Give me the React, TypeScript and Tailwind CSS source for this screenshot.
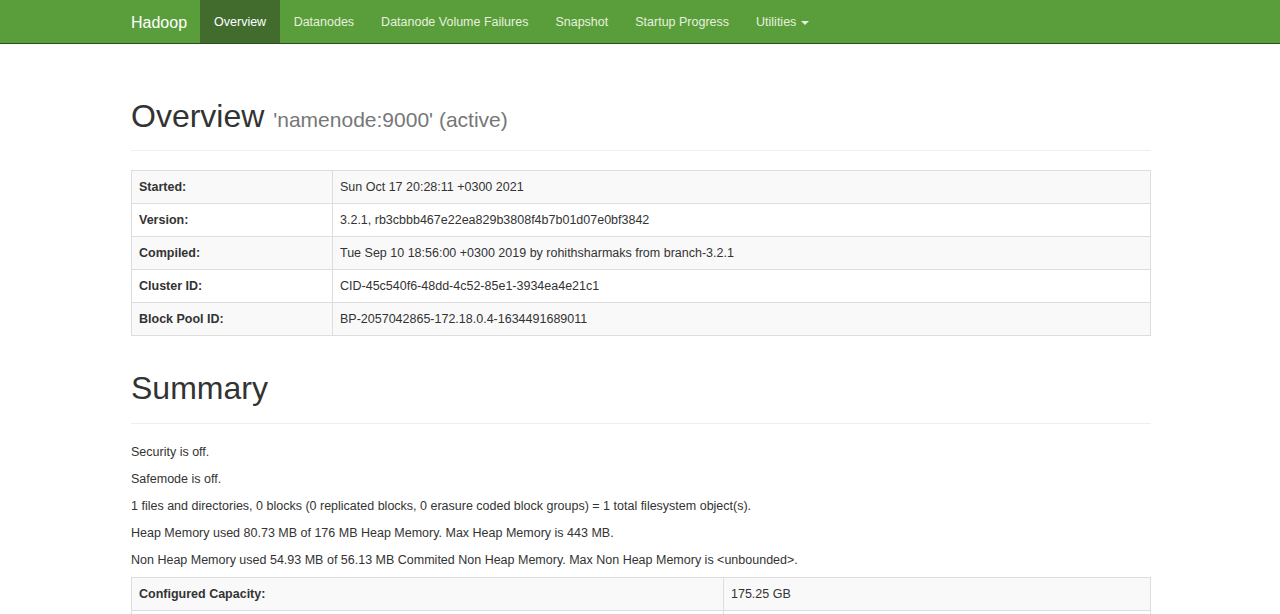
const navItems = ['Overview', 'Datanodes', 'Datanode Volume Failures', 'Snapshot', 'Startup Progress'];

const overviewRows: [string, string][] = [
  ['Started:', 'Sun Oct 17 20:28:11 +0300 2021'],
  ['Version:', '3.2.1, rb3cbbb467e22ea829b3808f4b7b01d07e0bf3842'],
  ['Compiled:', 'Tue Sep 10 18:56:00 +0300 2019 by rohithsharmaks from branch-3.2.1'],
  ['Cluster ID:', 'CID-45c540f6-48dd-4c52-85e1-3934ea4e21c1'],
  ['Block Pool ID:', 'BP-2057042865-172.18.0.4-1634491689011'],
];

const summaryLines = [
  'Security is off.',
  'Safemode is off.',
  '1 files and directories, 0 blocks (0 replicated blocks, 0 erasure coded block groups) = 1 total filesystem object(s).',
  'Heap Memory used 80.73 MB of 176 MB Heap Memory. Max Heap Memory is 443 MB.',
  'Non Heap Memory used 54.93 MB of 56.13 MB Commited Non Heap Memory. Max Non Heap Memory is <unbounded>.',
];

// second row is below the fold in the screenshot, only its top border shows
const capacityRows: [string, string][] = [
  ['Configured Capacity:', '175.25 GB'],
  ['\u00a0', '\u00a0'],
];

function InfoTable({ rows, labelWidth }: { rows: [string, string][]; labelWidth: string }) {
  return (
    <table className="w-full border-collapse border border-[#dddddd]">
      <tbody>
        {rows.map(([label, value], i) => (
          <tr key={i} className={i % 2 === 0 ? 'bg-[#f9f9f9]' : 'bg-white'}>
            <th className={`${labelWidth} border border-[#dddddd] px-[7px] py-[7px] text-left font-bold leading-[18px]`}>
              {label}
            </th>
            <td className="border border-[#dddddd] px-[7px] py-[7px] leading-[18px]">{value}</td>
          </tr>
        ))}
      </tbody>
    </table>
  );
}

export default function App() {
  return (
    <div className="h-[614px] overflow-hidden bg-white text-[12.5px] text-[#333333] font-['Liberation_Sans',Arial,sans-serif]">
      <nav className="h-[44px] border-b border-[#2f4d22] bg-[#5a9e3b]">
        <div className="ml-[131px] flex h-full w-[1020px] items-stretch">
          <span className="flex items-center pt-[2px] pr-[13px] text-[16px] text-white">Hadoop</span>
          {navItems.map((item) => (
            <span
              key={item}
              className={
                item === 'Overview'
                  ? 'flex items-center bg-[#416c2e] px-[14px] pt-[2px] text-[12.5px] text-white'
                  : 'flex items-center px-[13.5px] pt-[2px] text-[12.5px] text-[#e6f1df]'
              }
            >
              {item}
            </span>
          ))}
          <span className="flex items-center gap-[5px] px-[13.5px] pt-[2px] text-[12.5px] text-[#e6f1df]">
            Utilities
            <span className="h-0 w-0 border-x-[4px] border-t-[4px] border-x-transparent border-t-[#e6f1df]" />
          </span>
        </div>
      </nav>

      <main className="ml-[131px] w-[1020px]">
        <div className="mt-[55px] border-b border-[#eeeeee] pb-[13px]">
          <h1 className="text-[32px] leading-[35px] font-normal">
            Overview <span className="text-[21px] text-[#777777]">'namenode:9000' (active)</span>
          </h1>
        </div>
        <div className="mt-[19px]">
          <InfoTable rows={overviewRows} labelWidth="w-[201px]" />
        </div>

        <div className="mt-[35px] border-b border-[#eeeeee] pb-[17px]">
          <h1 className="text-[32px] leading-[35px] font-normal">Summary</h1>
        </div>
        <div className="mt-[19px] mb-[-1px]">
          {summaryLines.map((line) => (
            <p key={line} className="mb-[9px] leading-[18px]">
              {line}
            </p>
          ))}
        </div>
        <InfoTable rows={capacityRows} labelWidth="w-[592px]" />
      </main>
    </div>
  );
}
